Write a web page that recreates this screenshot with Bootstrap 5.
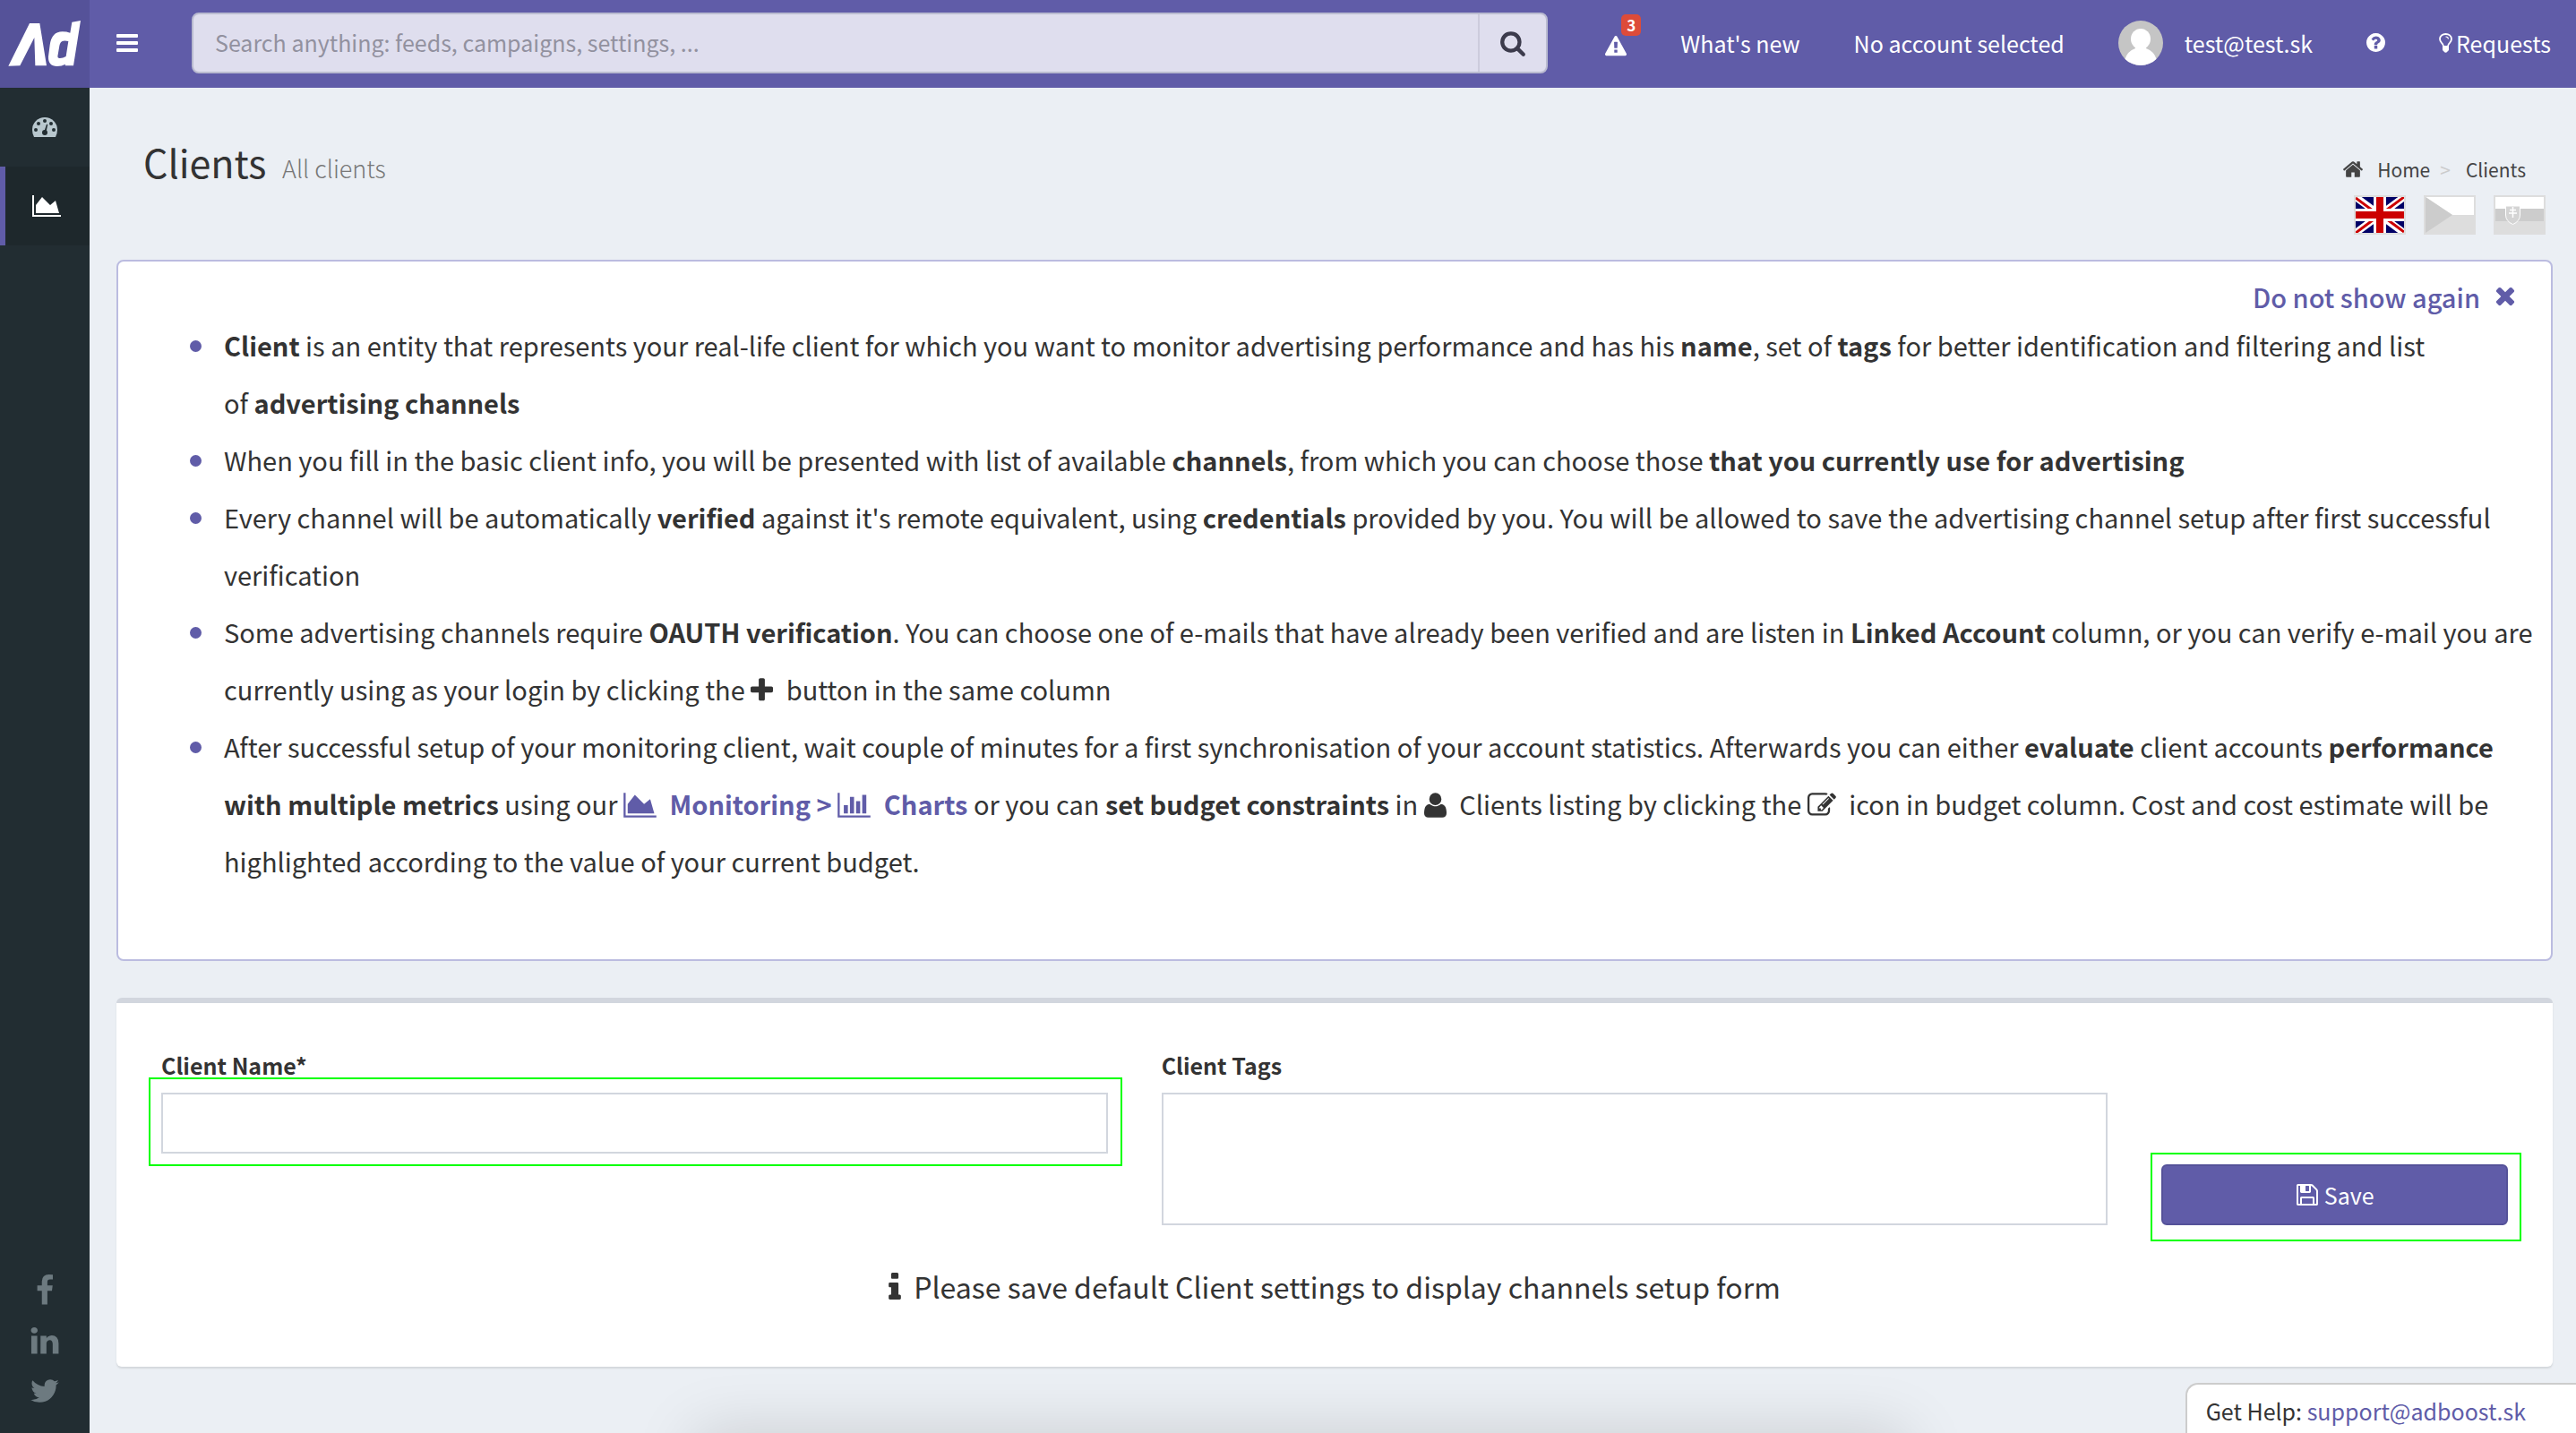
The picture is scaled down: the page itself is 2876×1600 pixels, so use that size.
<!DOCTYPE html>
<html lang="en">
<head>
<meta charset="utf-8">
<meta name="viewport" content="width=device-width, initial-scale=1">
<title>Clients</title>
<link href="https://cdn.jsdelivr.net/npm/bootstrap@5.3.0/dist/css/bootstrap.min.css" rel="stylesheet">
<style>
:root { --brand: #605ca8; --brand-dark: #555299; --line: #d2d6de; }
body { font-family: "Noto Sans CJK SC", "Open Sans", sans-serif; font-size: 25px; line-height: 40px; color: #333; background: #ebeff4; }
a { color: var(--brand); text-decoration: none; }
svg { fill: currentColor; flex: none; }

.topbar { height: 98px; background: var(--brand); color: #fff; }
.brand-box { width: 100px; height: 98px; background: var(--brand-dark); color: #fff; }
.toggle-btn { border: 0; background: none; color: #fff; padding: 0 30px 2px; line-height: 0; }
.search-group { height: 68px; margin: 0 34px 2px 30px; border: 2px solid #babbd0; border-radius: 8px; background: #dfdeee; overflow: hidden; }
.search-group .form-control { border: 0; border-radius: 0; background: none; font-size: 25px; padding: 0 24px; color: #333; box-shadow: none; }
.search-group .form-control::placeholder { color: #92919f; opacity: 1; }
.search-group button { width: 80px; border: 0; border-left: 2px solid #cccbdc; background: none; color: #3c3b4c; line-height: 0; }
.topnav a { color: #fff; padding: 0 30px 3px; white-space: nowrap; }
.topnav a:last-child { padding-right: 28px; }
.alert-count { top: -12px; left: 48px; width: 22px; height: 24px; border-radius: 5px; background: #dd4b39; font-size: 17px; line-height: 24px; font-weight: 700; text-align: center; }

.sidebar { width: 100px; background: #222d32; min-height: calc(100vh - 98px); }
.side-link { height: 88px; color: #b8c7ce; border-left: 6px solid transparent; padding-left: 30px; }
.side-link.active { background: #1e282c; border-color: var(--brand); color: #fff; }
.social-links { padding-bottom: 19px; }
.social-links a { height: 56px; color: #6d7a80; }

.page-main { padding: 0 26px 0 30px; }
.page-head { padding: 52px 8px 28px 30px; }
.page-title { font-size: 43px; line-height: 60px; font-weight: 400; }
.page-title small { font-size: 27px; font-weight: 300; color: #777; margin-left: 8px; }
.crumbs { font-size: 21px; line-height: 42px; margin: 18px 22px 8px 0; --bs-breadcrumb-divider: ">"; --bs-breadcrumb-divider-color: #ccc; --bs-breadcrumb-item-padding-x: 17px; }
.crumbs a { color: #444; }
.crumbs .breadcrumb-item + .breadcrumb-item { padding-left: 11px; }
.flag-row { gap: 20px; }
.flag-row a { line-height: 0; }

.help-card { border: 2px solid #bbbce0; border-radius: 8px; background: #fff; padding: 17px 10px 78px 58px; margin-bottom: 41px; }
.hide-btn { border: 0; background: none; padding: 0; margin-right: 29px; font-size: 29px; line-height: 44px; font-weight: 500; color: var(--brand); gap: 16px; }
.help-list { font-size: 29px; line-height: 64px; padding-left: 60px; list-style: none; }
.help-list li { position: relative; }
.help-list li::before { content: ""; position: absolute; left: -38px; top: 27px; width: 13px; height: 13px; border-radius: 50%; background: var(--brand); }
.help-list svg { height: 32px; vertical-align: -5px; margin-right: 8px; }
.help-list a { font-weight: 700; }

.form-card { border: 0; border-top: 6px solid var(--line); border-radius: 6px; background: #fff; padding: 49px 20px 64px; box-shadow: 0 2px 2px rgba(0,0,0,.1); }
.form-card .row { --bs-gutter-x: 60px; margin: 0; }
.form-card label { font-weight: 700; margin-bottom: 11px; }
.form-card .form-control { border: 2px solid var(--line); border-radius: 0; height: 68px; font-size: 25px; }
.form-card textarea.form-control { height: 148px; resize: none; }
.save-btn { height: 68px; font-size: 25px; line-height: 40px; border: 2px solid var(--brand-dark); border-radius: 6px; background: var(--brand); color: #fff; gap: 6px; }
.marked { position: relative; }
.marked::after { content: ""; position: absolute; inset: -17px -16px -14px -14px; border: 2px solid #0f0; pointer-events: none; }
.marked.marked-btn::after { inset: -13px -15px -18px -12px; }
.save-note { font-size: 32px; line-height: 52px; margin: 42px 0 0; gap: 14px; }

.dock-shade { position: fixed; top: 100%; left: 27%; right: 26%; height: 100px; box-shadow: 0 0 70px rgba(0,0,0,.15); pointer-events: none; }
.help-tab { position: fixed; right: 0; bottom: 0; height: 56px; padding: 9px 56px 0 21px; border: 2px solid #ccc; border-width: 2px 0 0 2px; border-radius: 14px 0 0 0; background: #fff; }
</style>
<script src="https://cdn.jsdelivr.net/npm/bootstrap@5.3.0/dist/js/bootstrap.bundle.min.js"></script>
</head>
<body>
<header class="topbar d-flex align-items-center">
  <a class="brand-box d-block" href="#" aria-label="Adboost home">
    <svg width="100" height="98" viewBox="0 0 300 294"><path d="M28 221 99 78h34l23 142h-38l-3-94-48 94Z"/><path fill-rule="evenodd" d="m241 74 29-5-24 151h-28l1-5q-12 7-28 7-30 0-29-32l5-39q6-45 42-45 14 0 26 4ZM229 138q-10-2-17-1-11 2-13 17l-6 35q0 7 8 6 10 0 20-6Z"/></svg>
  </a>
  <button class="toggle-btn" type="button" aria-label="Toggle navigation">
    <svg width="24" height="20" viewBox="0 0 24 20"><rect width="24" height="4" rx="1"/><rect y="8" width="24" height="4" rx="1"/><rect y="16" width="24" height="4" rx="1"/></svg>
  </button>
  <form class="search-group d-flex flex-grow-1" role="search">
    <input class="form-control" type="search" aria-label="Search" placeholder="Search anything: feeds, campaigns, settings, ...">
    <button type="button" aria-label="Search">
      <svg width="30" height="30" viewBox="0 0 1792 1792"><path d="M1216 832q0-185-131.500-316.500t-316.500-131.500-316.500 131.500-131.500 316.500 131.500 316.500 316.500 131.500 316.500-131.500 131.500-316.500zm512 832q0 52-38 90t-90 38q-54 0-90-38l-343-342q-179 124-399 124-143 0-273.500-55.500t-225-150-150-225-55.500-273.500 55.500-273.500 150-225 225-150 273.500-55.500 273.500 55.500 225 150 150 225 55.500 273.500q0 220-124 399l343 343q37 37 37 90z"/></svg>
    </button>
  </form>
  <nav class="topnav d-flex align-items-center">
    <a class="position-relative" href="#" aria-label="Alerts"><svg width="24" height="24" viewBox="0 0 1792 1792"><path d="M1024 1375v-190q0-14-9.500-23.500t-22.500-9.500h-192q-13 0-22.500 9.500t-9.500 23.500v190q0 14 9.500 23.500t22.500 9.500h192q13 0 22.500-9.500t9.500-23.500zm-2-374l18-459q0-12-10-19-13-11-24-11h-220q-11 0-24 11-10 7-10 21l17 457q0 10 10 16.500t24 6.500h185q14 0 23.500-6.500t10.500-16.500zm-14-934l768 1408q35 63-2 126-17 29-46.500 46t-63.500 17h-1536q-34 0-63.500-17t-46.500-46q-37-63-2-126l768-1408q17-31 47-49t65-18 65 18 47 49z"/></svg><span class="alert-count position-absolute">3</span></a>
    <a href="#">What's new</a>
    <a href="#">No account selected</a>
    <a class="d-flex align-items-center" href="#"><svg class="me-3" width="50" height="50" viewBox="0 0 50 50"><defs><clipPath id="round"><circle cx="25" cy="25" r="25"/></clipPath></defs><g clip-path="url(#round)"><rect width="50" height="50" fill="#c5c5c5"/><ellipse cx="25" cy="20.500" rx="11" ry="11.500" fill="#fff"/><path d="M19 28h12v3q9 3 12 13v6H7v-6q3-10 12-13Z" fill="#fff"/></g></svg><span class="ps-2">test@test.sk</span></a>
    <a class="d-flex" href="#" aria-label="Help"><svg width="21" height="21" viewBox="128 128 1536 1536"><path d="M1024 1376v-192q0-14-9-23t-23-9h-192q-14 0-23 9t-9 23v192q0 14 9 23t23 9h192q14 0 23-9t9-23zm256-672q0-88-55.500-163t-138.500-116-170-41q-243 0-371 213-15 24 8 42l132 100q7 6 19 6 16 0 25-12 53-68 86-92 34-24 86-24 48 0 85.500 26t37.500 59q0 38-20 61t-68 45q-63 28-115.500 86.500t-52.500 125.500v36q0 14 9 23t23 9h192q14 0 23-9t9-23q0-19 21.500-49.500t54.500-49.500q32-18 49-28.500t46-35 44.500-48 28-60.500 12.500-81zm384 192q0 209-103 385.500t-279.500 279.500-385.500 103-385.500-103-279.500-279.500-103-385.500 103-385.500 279.500-279.500 385.500-103 385.500 103 279.500 279.500 103 385.500z"/></svg></a>
    <a class="d-flex align-items-center gap-1" href="#"><svg width="15" height="22" viewBox="0 0 15 22"><path d="M5 14.500Q4.800 12.500 3 10.800 1 8.800 1 6.600C1 3.200 4 1 7.500 1S14 3.200 14 6.600q0 2.200-2 4.200-1.800 1.700-2 3.700" fill="none" stroke="currentColor" stroke-width="1.800"/><path d="M7.500 4Q10.200 4 10.500 6.500" fill="none" stroke="currentColor" stroke-width="1.200"/><path d="M4 14h7v5l-1.500 1.500Q7.500 23 5.500 20.500L4 19Z"/></svg><span>Requests</span></a>
  </nav>
</header>

<div class="d-flex">
  <aside class="sidebar d-flex flex-column flex-shrink-0">
    <a class="side-link d-flex align-items-center" href="#" aria-label="Dashboard"><svg width="28" height="22" viewBox="0 0 84 66"><path d="M6 66Q0 56 0 42a42 42 0 0 1 84 0q0 14-6 24Z"/><g fill="#222d32"><circle cx="12" cy="42" r="6"/><circle cx="21" cy="21" r="6"/><circle cx="42" cy="12" r="6"/><circle cx="63" cy="21" r="6"/><circle cx="72" cy="42" r="6"/><circle cx="42" cy="51" r="9"/><path d="m48 23 4 1-6 28-7-2Z"/></g></svg></a>
    <a class="side-link active d-flex align-items-center" href="#" aria-label="Monitoring"><svg width="32" height="24" viewBox="0 128 2048 1536"><path d="M2048 1536v128h-2048v-1536h128v1408h1920zm-384-1024l256 896h-1664v-576l448-576 576 576z"/></svg></a>
    <div class="social-links mt-auto">
      <a class="d-flex align-items-center justify-content-center" href="#" aria-label="Facebook"><svg width="36" height="36" viewBox="0 0 1792 1792"><path d="M1343 12v264h-157q-86 0-116 36t-30 108v189h293l-39 296h-254v759h-306v-759h-255v-296h255v-218q0-186 104-288.500t277-102.500q147 0 228 12z"/></svg></a>
      <a class="d-flex align-items-center justify-content-center" href="#" aria-label="LinkedIn"><svg width="36" height="36" viewBox="0 0 1792 1792"><path d="M477 625v991h-330v-991h330zm21-306q1 73-50.500 122t-135.500 49h-2q-82 0-132-49t-50-122q0-74 51.500-122.500t134.500-48.500 133 48.500 51 122.500zm1166 729v568h-329v-530q0-105-40.500-164.500t-126.500-59.500q-63 0-105.500 34.500t-63.500 85.500q-11 30-11 81v553h-329q2-399 2-647t-1-296l-1-48h329v144h-2q20-32 41-56t56.500-52 87-43.500 114.500-15.500q171 0 275 113.500t104 332.500z"/></svg></a>
      <a class="d-flex align-items-center justify-content-center" href="#" aria-label="Twitter"><svg width="36" height="36" viewBox="0 0 1792 1792"><path d="M1684 408q-67 98-162 167 1 14 1 42 0 130-38 259.500t-115.500 248.500-184.500 210.500-258 146-323 54.500q-271 0-496-145 35 4 78 4 225 0 401-138-105-2-188-64.500t-114-159.500q33 5 61 5 43 0 85-11-112-23-185.500-111.500t-73.500-205.500v-4q68 38 146 41-66-44-105-115t-39-154q0-88 44-163 121 149 294.500 238.500t371.500 99.500q-8-38-8-74 0-134 94.500-228.500t228.500-94.500q140 0 236 102 109-21 205-78-37 115-142 178 93-10 186-50z"/></svg></a>
    </div>
  </aside>

  <main class="page-main flex-grow-1">
    <div class="page-head d-flex justify-content-between align-items-start">
      <h1 class="page-title m-0">Clients <small>All clients</small></h1>
      <div class="d-flex flex-column align-items-end">
        <nav aria-label="breadcrumb">
          <ol class="crumbs breadcrumb">
            <li class="breadcrumb-item"><a class="d-flex align-items-center" href="#"><svg class="me-3" width="22" height="18" viewBox="90 256 1612 1280"><path d="M1472 992v480q0 26-19 45t-45 19h-384v-384h-256v384h-384q-26 0-45-19t-19-45v-480q0-1 .5-3t.5-3l575-474 575 474q1 2 1 6zm223-69l-62 74q-8 9-21 11h-3q-13 0-21-7l-692-577-692 577q-12 8-24 7-13-2-21-11l-62-74q-8-10-7-23.500t11-21.500l719-599q32-26 76-26t76 26l244 204v-195q0-14 9-23t23-9h192q14 0 23 9t9 23v408l219 182q10 8 11 21.500t-7 23.500z"/></svg>Home</a></li>
            <li class="breadcrumb-item"><a href="#">Clients</a></li>
          </ol>
        </nav>
        <div class="flag-row d-flex">
          <a href="#" aria-label="English"><svg width="58" height="44" viewBox="0 0 58 44"><rect width="58" height="44" fill="#ddd"/><svg x="2" y="2" width="54" height="40" viewBox="0 0 54 40"><rect width="54" height="40" fill="#006"/><path d="m0 0 54 40M54 0 0 40" stroke="#fff" stroke-width="8"/><path d="m0 1 27 20M54 0 27 20M0 40l27-20M54 39 27 19" stroke="#c00" stroke-width="3"/><path d="M27 0v40M0 20h54" stroke="#fff" stroke-width="14"/><path d="M27 0v40M0 20h54" stroke="#c00" stroke-width="8"/></svg></svg></a>
          <a href="#" aria-label="Czech"><svg width="58" height="44" viewBox="0 0 58 44"><rect width="58" height="44" fill="#ddd"/><path fill="#fff" d="M2 2h54v20H32Z"/><path fill="#ccc" d="m2 2 30 20L2 42Z"/></svg></a>
          <a href="#" aria-label="Slovak"><svg width="58" height="44" viewBox="0 0 58 44"><rect width="58" height="44" fill="#ddd"/><path fill="#fff" d="M2 2h54v13H2Z"/><path fill="#ccc" d="M2 15h54v14H2Z"/><path d="M13.500 12h16v10q0 7-8 10.500-8-3.500-8-10.500Z" fill="#d4d4d4" stroke="#fff"/><path d="M21.500 13v12M18 16.500h7M17 20h9" stroke="#fff" stroke-width="1.500"/></svg></a>
        </div>
      </div>
    </div>

    <section class="help-card">
      <div class="d-flex justify-content-end">
        <button class="hide-btn d-flex align-items-center" type="button">Do not show again <svg width="24" height="24" viewBox="192 256 1408 1408"><path d="M1490 1322q0 40-28 68l-136 136q-28 28-68 28t-68-28l-294-294-294 294q-28 28-68 28t-68-28l-136-136q-28-28-28-68t28-68l294-294-294-294q-28-28-28-68t28-68l136-136q28-28 68-28t68 28l294 294 294-294q28-28 68-28t68 28l136 136q28 28 28 68t-28 68l-294 294 294 294q28 28 28 68z"/></svg></button>
      </div>
      <ul class="help-list m-0">
        <li><b>Client</b> is an entity that represents your real-life client for which you want to monitor advertising performance and has his <b>name</b>, set of <b>tags</b> for better identification and filtering and list of&nbsp;<b>advertising&nbsp;channels</b></li>
        <li>When you fill in the basic client info, you will be presented with list of available <b>channels</b>, from which you can choose those <b>that you currently use for advertising</b></li>
        <li>Every channel will be automatically <b>verified</b> against it's remote equivalent, using <b>credentials</b> provided by you. You will be allowed to save the advertising channel setup after first successful verification</li>
        <li>Some advertising channels require <b>OAUTH verification</b>. You can choose one of e-mails that have already been verified and are listen in <b>Linked Account</b> column, or you can verify e-mail you are currently using as your login by clicking the <svg width="25" viewBox="192 0 1408 1792"><path d="M1600 736v192q0 40-28 68t-68 28h-416v416q0 40-28 68t-68 28h-192q-40 0-68-28t-28-68v-416h-416q-40 0-68-28t-28-68v-192q0-40 28-68t68-28h416v-416q0-40 28-68t68-28h192q40 0 68 28t28 68v416h416q40 0 68 28t28 68z"/></svg> button in the same column</li>
        <li>After successful setup of your monitoring client, wait couple of minutes for a first synchronisation of your account statistics. Afterwards you can either <b>evaluate</b> client accounts <b>performance with multiple metrics</b> using our <a href="#"><svg width="37" viewBox="0 0 2048 1792"><path d="M2048 1536v128h-2048v-1536h128v1408h1920zm-384-1024l256 896h-1664v-576l448-576 576 576z"/></svg> Monitoring &gt; <svg width="37" viewBox="0 0 2048 1792"><path d="M640 896v512h-256v-512h256zm384-512v1024h-256v-1024h256zm1024 1152v128h-2048v-1536h128v1408h1920zm-640-896v768h-256v-768h256zm384-384v1152h-256v-1152h256z"/></svg> Charts</a> or you can <b>set budget constraints</b> in <svg width="25" viewBox="192 0 1408 1792"><path d="M1600 1405q0 120-73 189.500t-194 69.500h-874q-121 0-194-69.500t-73-189.500q0-53 3.500-103.500t14-109 26.500-108.500 43-97.500 62-81 85.500-53.500 111.500-20q9 0 42 21.500t74.500 48 108 48 133.500 21.500 133.500-21.500 108-48 74.500-48 42-21.500q61 0 111.500 20t85.500 53.500 62 81 43 97.500 26.500 108.500 14 109 3.500 103.500zm-320-893q0 159-112.500 271.500t-271.500 112.500-271.500-112.500-112.500-271.500 112.500-271.500 271.500-112.500 271.500 112.500 112.500 271.500z"/></svg> Clients listing by clicking the <svg width="32" viewBox="0 0 1792 1792"><path d="M888 1184l116-116-152-152-116 116v56h96v96h56zm440-720q-16-16-33 1l-350 350q-17 17-1 33t33-1l350-350q17-17 1-33zm80 594v190q0 119-84.500 203.500t-203.500 84.500h-832q-119 0-203.500-84.500t-84.500-203.500v-832q0-119 84.500-203.500t203.500-84.500h832q63 0 117 25 15 7 18 23 3 17-9 29l-49 49q-14 14-32 8-23-6-45-6h-832q-66 0-113 47t-47 113v832q0 66 47 113t113 47h832q66 0 113-47t47-113v-126q0-13 9-22l64-64q15-15 35-7t20 29zm-96-738l288 288-672 672h-288v-288zm444 132l-92 92-288-288 92-92q28-28 68-28t68 28l152 152q28 28 28 68t-28 68z"/></svg> icon in budget column. Cost and cost estimate will be highlighted according to the value of your current budget.</li>
      </ul>
    </section>

    <form class="form-card">
      <div class="row">
        <div class="col-5">
          <label class="d-block" for="clientName">Client Name*</label>
          <div class="marked"><input class="form-control" type="text" id="clientName"></div>
        </div>
        <div class="col-5">
          <label class="d-block" for="clientTags">Client Tags</label>
          <textarea class="form-control" id="clientTags"></textarea>
        </div>
        <div class="col-2 d-flex align-items-end">
          <div class="marked marked-btn w-100">
            <button class="save-btn btn w-100 d-flex align-items-center justify-content-center" type="button"><svg width="26" height="26" viewBox="64 64 1664 1664"><path d="M512 1536h768v-384h-768v384zm896 0h128v-896q0-14-10-38.500t-20-34.500l-281-281q-10-10-34-20t-39-10v416q0 40-28 68t-68 28h-576q-40 0-68-28t-28-68v-416h-128v1280h128v-416q0-40 28-68t68-28h832q40 0 68 28t28 68v416zm-384-928v-320q0-13-9.500-22.500t-22.500-9.500h-192q-13 0-22.500 9.500t-9.500 22.500v320q0 13 9.500 22.500t22.500 9.500h192q13 0 22.500-9.500t9.500-22.500zm640 32v928q0 40-28 68t-68 28h-1344q-40 0-68-28t-28-68v-1344q0-40 28-68t68-28h928q40 0 88 20t76 48l280 280q28 28 48 76t20 88z"/></svg>Save</button>
          </div>
        </div>
      </div>
      <p class="save-note d-flex align-items-center justify-content-center"><svg width="14" height="30" viewBox="576 128 640 1408"><path d="M1216 1344v128q0 26-19 45t-45 19h-512q-26 0-45-19t-19-45v-128q0-26 19-45t45-19h64v-384h-64q-26 0-45-19t-19-45v-128q0-26 19-45t45-19h384q26 0 45 19t19 45v576h64q26 0 45 19t19 45zm-128-1152v192q0 26-19 45t-45 19h-256q-26 0-45-19t-19-45v-192q0-26 19-45t45-19h256q26 0 45 19t19 45z"/></svg>Please save default Client settings to display channels setup form</p>
    </form>
  </main>
</div>
<div class="dock-shade"></div>
<div class="help-tab">Get Help: <a href="mailto:support@adboost.sk">support@adboost.sk</a></div>
</body>
</html>
